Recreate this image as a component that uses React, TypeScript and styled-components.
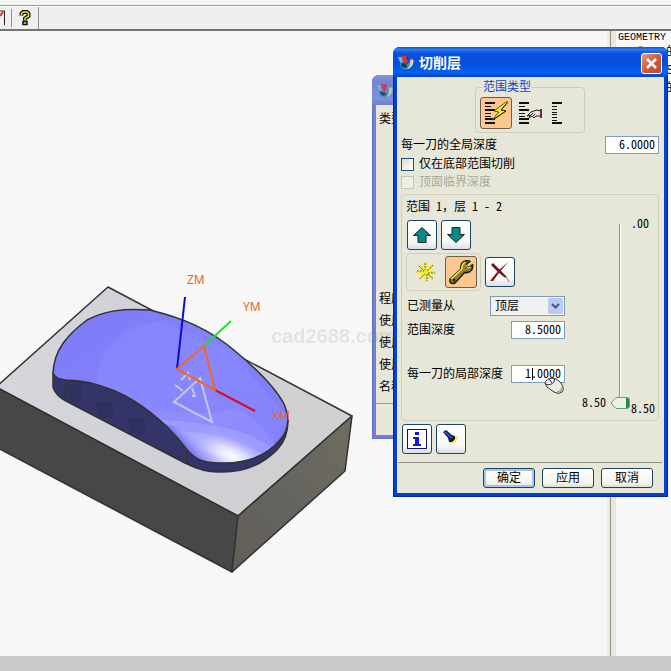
import React from "react";
import styled, { createGlobalStyle, css } from "styled-components";

const GlobalStyle = createGlobalStyle`
  * { box-sizing: border-box; }
  html, body { margin: 0; height: 100%; overflow: hidden; }
  #root { height: 100%; }
  body, button, input, select {
    font-family: "Liberation Sans", "Noto Sans CJK SC", sans-serif;
    font-size: 12px;
    line-height: 16px;
    color: #000;
  }
`;

const halfWidth = css`
  font-family: "Noto Sans CJK SC", monospace;
  font-feature-settings: "hwid";
`;

const Screen = styled.div`
  position: relative;
  display: flex;
  flex-direction: column;
  height: 100vh;
  overflow: hidden;
  background: #f7f7f7;
`;

const MenuStrip = styled.div`
  height: 6px;
  flex: none;
  background: #f4f4f3;
  border-bottom: 1px solid #9c9c9c;
`;

const Toolbar = styled.div`
  display: flex;
  align-items: center;
  flex: none;
  height: 25px;
  background: #efefef;
  border-top: 1px solid #fff;
  border-bottom: 2px solid #73736f;
`;

const ToolButton = styled.button<{ $w: number }>`
  display: flex;
  justify-content: center;
  align-items: center;
  width: ${(p) => p.$w}px;
  height: 22px;
  padding: 0;
  border: 0;
  background: none;
`;

const Separator = styled.span<{ $full?: boolean }>`
  width: 1px;
  height: ${(p) => (p.$full ? 22 : 18)}px;
  background: #8f8f8f;
`;

const Workspace = styled.main`
  display: flex;
  flex: 1;
  min-height: 0;
`;

const Viewport = styled.section`
  flex: 1;
  min-width: 0;
  overflow: hidden;
  svg { display: block; }
`;

const Splitter = styled.div`
  flex: none;
  width: 9px;
  background: #e7e7dc;
  border-left: 2px solid #efefe6;
  &::before {
    content: "";
    display: block;
    width: 1px;
    height: 100%;
    margin-left: 1px;
    background: #95947f;
  }
`;

const Navigator = styled.aside`
  position: relative;
  flex: none;
  width: 55px;
  padding: 1px 0 0 2px;
  overflow: hidden;
  white-space: nowrap;
  background: #f8f8f8;
`;

const NavHeading = styled.div`
  font-family: "Liberation Mono", monospace;
  font-size: 10px;
  line-height: 11px;
`;

const NavMark = styled.svg`
  position: absolute;
  left: 18px;
  top: 12px;
`;

const NavRow = styled.div`
  display: flex;
  height: 18px;
  align-items: center;
  padding-left: 48px;
`;

const StatusBar = styled.footer`
  flex: none;
  height: 15px;
  background: #cbcbcb;
`;

const Watermark = styled.div`
  position: absolute;
  left: 271px;
  top: 325px;
  font-size: 20px;
  line-height: 22px;
  font-weight: 700;
  color: rgba(120, 120, 120, 0.16);
`;

const Dialog = styled.section<{ $x: number; $y: number; $w: number; $inactive?: boolean }>`
  position: absolute;
  left: ${(p) => p.$x}px;
  top: ${(p) => p.$y}px;
  width: ${(p) => p.$w}px;
  padding: 0 4px 4px;
  border-radius: 7px 7px 0 0;
  background: ${(p) => (p.$inactive ? "#7180d2" : "#0541cf")};
  box-shadow: inset 0 0 0 1px ${(p) => (p.$inactive ? "#6272c4" : "#0026a8")};
`;

const TitleBar = styled.header<{ $inactive?: boolean }>`
  display: flex;
  align-items: center;
  height: 30px;
  margin: 0 -4px;
  padding: 2px 6px 0 5px;
  border-radius: 7px 7px 0 0;
  background: ${(p) =>
    p.$inactive
      ? "linear-gradient(#8795dc, #7484d4 20%, #7d90dd 80%, #6f7ecb)"
      : "linear-gradient(#1257c8 0, #2a7df2 8%, #0a50dc 22%, #0450dd 55%, #0560f4 85%, #0344c4)"};
`;

const Title = styled.h1`
  flex: 1;
  margin: 0 0 0 5px;
  font-size: 14px;
  line-height: 20px;
  font-weight: 700;
  color: #fff;
`;

const CloseButton = styled.button`
  display: flex;
  align-items: center;
  justify-content: center;
  width: 21px;
  height: 21px;
  padding: 0;
  border: 1px solid #fff;
  border-radius: 3px;
  background: linear-gradient(135deg, #e59a84, #cf5a3d 50%, #b94a30);
`;

const Body = styled.div`
  display: flex;
  flex-direction: column;
  padding: 3px 5px 5px 4px;
  background: #e7e7d9;
`;

const BackBody = styled.div`
  display: flex;
  flex-direction: column;
  padding: 6px 3px 0;
  background: #e7e7d9;
`;

const BackLabels = styled.div<{ $top?: number }>`
  display: flex;
  flex-direction: column;
  gap: 6px;
  margin-top: ${(p) => p.$top ?? 0}px;
`;

const BackFooter = styled.div`
  height: 32px;
  margin: 8px -3px 0;
  border-top: 1px solid #9a9a90;
`;

const RangeType = styled.fieldset`
  align-self: center;
  display: flex;
  align-items: center;
  gap: 4px;
  width: 110px;
  height: 53px;
  margin: 0;
  padding: 3px 4px;
  border: 1px solid #cbcbb9;
  border-radius: 4px;
`;

const Legend = styled.legend`
  margin-left: 2px;
  padding: 0 1px;
  line-height: 14px;
  color: #1146c4;
`;

const Choice = styled.button<{ $on?: boolean; $w?: number }>`
  display: flex;
  align-items: center;
  justify-content: center;
  flex: none;
  width: ${(p) => p.$w ?? 32}px;
  height: 32px;
  padding: 0;
  border: ${(p) => (p.$on ? "1px solid #6b5f4c" : "0")};
  border-radius: 3px;
  background: ${(p) => (p.$on ? "#fcc890" : "none")};
`;

const Row = styled.div<{ $top: number }>`
  display: flex;
  align-items: center;
  justify-content: space-between;
  margin-top: ${(p) => p.$top}px;
`;

const NumberBox = styled.input`
  width: 54px;
  height: 18px;
  padding: 0 3px 3px;
  border: 1px solid #7d9cc0;
  border-radius: 0;
  background: #fff;
  line-height: 14px;
  text-align: right;
  outline: none;
  ${halfWidth}
`;

const EditWrap = styled.span`
  position: relative;
  display: flex;
`;

const Caret = styled.span`
  position: absolute;
  left: 21px;
  top: 3px;
  width: 1px;
  height: 12px;
  background: #000;
`;

const CheckLabel = styled.label<{ $top: number; $off?: boolean }>`
  display: flex;
  align-items: center;
  gap: 5px;
  height: 16px;
  margin-top: ${(p) => p.$top}px;
  color: ${(p) => (p.$off ? "#a9a99c" : "#000")};
`;

const Check = styled.input`
  appearance: none;
  width: 13px;
  height: 13px;
  margin: 0;
  border: 1px solid #21507e;
  background: linear-gradient(135deg, #dcdcd4, #fff);
  &:disabled {
    border-color: #c6c6b8;
    background: #efefe8;
  }
`;

const Group = styled.section`
  display: flex;
  justify-content: space-between;
  margin-top: 4px;
  padding: 3px 2px 5px 5px;
  border: 1px solid #cfcfbe;
  border-radius: 4px;
`;

const Settings = styled.div`
  display: flex;
  flex-direction: column;
  width: 158px;
`;

const RangeTitle = styled.div`
  height: 16px;
  margin-left: -1px;
  white-space: pre;
  ${halfWidth}
`;

const WideMark = styled.span`
  font-feature-settings: normal;
`;

const ButtonRow = styled.div<{ $top: number; $pull?: boolean }>`
  display: flex;
  align-items: center;
  gap: 4px;
  margin-top: ${(p) => p.$top}px;
  margin-left: ${(p) => (p.$pull ? 1 : 0)}px;
`;

const IconButton = styled.button`
  display: flex;
  align-items: center;
  justify-content: center;
  width: 30px;
  height: 30px;
  padding: 0;
  border: 1px solid #1d4464;
  border-radius: 3px;
  background: linear-gradient(#fff, #f7f7f4 75%, #dcdce6);
`;

const ModeBox = styled.div`
  display: flex;
  align-items: center;
  gap: 3px;
  height: 38px;
  margin-left: -1px;
  padding: 2px 3px;
  border: 1px solid #cfcfbe;
  border-radius: 4px;
`;

const SelectWrap = styled.span`
  position: relative;
  display: flex;
  width: 75px;
`;

const Select = styled.select`
  appearance: none;
  width: 100%;
  height: 20px;
  padding: 0 18px 0 4px;
  border: 1px solid #7d9cc0;
  border-radius: 0;
  background: #f1f1f0;
`;

const SelectArrow = styled.svg`
  position: absolute;
  right: 2px;
  top: 2px;
  pointer-events: none;
`;

const DepthScale = styled.div`
  display: flex;
  align-items: stretch;
  margin-top: 18px;
  height: 199px;
  line-height: 14px;
  ${halfWidth}
`;

const CurrentDepth = styled.output`
  align-self: flex-end;
  width: 24px;
  margin: 0 4px 6px 0;
`;

const ScaleEnds = styled.div`
  display: flex;
  flex-direction: column;
  justify-content: space-between;
  width: 26px;
  padding-left: 1px;
`;

const thumb = `url("data:image/svg+xml,%3Csvg xmlns='http://www.w3.org/2000/svg' width='20' height='12'%3E%3Cpath d='M1 6L6 .5H18L19.500 2V10L18 11.500H6Z' fill='%23eef0ea' stroke='%2358a86c'/%3E%3Cpath d='M16 1H18L19 2V10L18 11H16Z' fill='%23268a42'/%3E%3C/svg%3E")`;

const Slider = styled.input`
  appearance: none;
  writing-mode: vertical-lr;
  width: 20px;
  height: 185px;
  margin: 8px 0 0;
  background: linear-gradient(90deg, transparent 9px, #92928c 9px, #92928c 10px, #fff 10px, #fff 11px, transparent 11px);
  &::-webkit-slider-thumb {
    appearance: none;
    width: 20px;
    height: 12px;
    background: ${thumb} no-repeat;
  }
`;

const Footer = styled.footer`
  display: flex;
  justify-content: flex-end;
  gap: 7px;
  margin: 8px -3px 0;
  padding: 5px 9px 0;
  border-top: 1px solid #8e8e86;
`;

const PushButton = styled.button<{ $primary?: boolean }>`
  width: 52px;
  height: 20px;
  padding: 0;
  border: 1px solid #1d4464;
  border-radius: 3px;
  background: linear-gradient(#fff, #f3f3ee 80%, #dcdcd0);
  box-shadow: ${(p) => (p.$primary ? "inset 0 0 0 2px #a9c3ec" : "none")};
`;

const Pointer = styled.svg`
  position: absolute;
  left: 150px;
  top: 330px;
  pointer-events: none;
`;

const AppIcon = ({ faded }: { faded?: boolean }) => (
  <svg width="16" height="16" viewBox="0 0 16 16" opacity={faded ? 0.8 : 1} aria-hidden="true">
    <path d="M2 7 L8 10 L12 7 L15 4 Q16 9 12.500 12.500 Q9 16 4 13.500 L2 10Z" fill="#2f9aa8" />
    <path d="M12 5 Q16 3 15.500 7 Q15 11 11 13.500 L9 14 Q13 10 12 5Z" fill="#d7d79a" />
    <path d="M3 8 L8 9.500 L9.500 12 L6 13 L3.500 11Z" fill="#0b3d5c" />
    <path d="M0 2 L4 2 L6 7 L3 8 L1 5Z" fill="#63c3dc" />
    <path d="M4 1 L9 1 L8.500 4 L10.500 6.500 L7.500 9 L4.500 6Z" fill="#e0303a" />
    <path d="M9 1 L10 4.500 L8.500 4Z" fill="#7c172e" />
  </svg>
);

const Levels = ({ kind }: { kind: "auto" | "user" | "single" }) => (
  <svg width={kind === "single" ? 14 : 26} height="26" viewBox={kind === "single" ? "0 0 14 26" : "0 0 26 26"} shapeRendering="crispEdges" aria-hidden="true">
    {kind === "single" ? (
      <path d="M2 2H12V4H2ZM2 6H7V7H2ZM2 9H7V10H2ZM2 12H7V13H2ZM2 14H7V15H2ZM2 17H7V18H2ZM2 20H7V21H2ZM2 22H12V24H2Z" fill="#111" />
    ) : (
      <path d="M2 2H12V4H2ZM2 6H8V7H2ZM2 9H12V11H2ZM2 13H8V14H2ZM2 16H8V17H2ZM2 18H12V20H2ZM2 22H12V24H2Z" fill="#111" />
    )}
    {kind === "auto" && (
      <g shapeRendering="auto">
        <path d="M23 2 L11 11 L16 12 L9 20 L23 11 L18 10 L25 2Z" fill="#ffed32" stroke="#5c5210" strokeWidth="1" />
        <path d="M24 3 L18 10 L23 11 L10 20" fill="none" stroke="#2c2810" />
      </g>
    )}
    {kind === "user" && (
      <g shapeRendering="auto">
        <path d="M10 16 L14 12 L20 10 L24 11 V16 L19 16 L17 18 L15 16 L12 18 L13 15Z" fill="#e4e4de" stroke="#222" />
        <path d="M12 17 L16 13 M15 17 L18 14" stroke="#222" />
        <path d="M23 9H25V18H23Z" fill="#8a1f35" />
      </g>
    )}
  </svg>
);

const Arrow = ({ down }: { down?: boolean }) => (
  <svg width="20" height="18" viewBox="0 0 20 18" aria-hidden="true">
    <path
      d={down ? "M6 1.500H14V8.500H18.500L10 16.500L1.500 8.500H6Z" : "M10 1.500L18.500 9.500H14V16.500H6V9.500H1.500Z"}
      fill="#078a86"
      stroke="#132b2a"
    />
  </svg>
);

const Spark = () => (
  <svg width="22" height="22" viewBox="0 0 22 22" aria-hidden="true">
    <path d="M11 1V21M1 11H21M4 4L18 18M18 4L4 18" stroke="#efe732" strokeWidth="2.500" />
    <path d="M10 2V9M12 13V20M2 10H9M13 12H20M4 5L9 10M18 4L12 10M5 18L10 13M13 13L18 18" stroke="#6e6a1d" strokeWidth="1" strokeDasharray="2 1" />
  </svg>
);

const Wrench = () => (
  <svg width="26" height="26" viewBox="0 0 26 26" aria-hidden="true">
    <path d="M2 20 L13 10 Q12 5 16 2.500 Q19 1 22 2.500 L18.500 5 L19 8 L22 8 L24.500 5.500 Q25.500 10 22 12.500 Q19 14 16.500 13.500 L7 24 Q4 25.500 2 23Z" fill="#8c8132" stroke="#201d0d" strokeWidth="1.500" strokeLinejoin="round" />
    <path d="M3 20 L14 10 Q13 6 17 3" fill="none" stroke="#ffe94a" strokeWidth="1.500" />
    <path d="M18 6 L20 9 L23 8" fill="none" stroke="#ffe94a" />
    <circle cx="6" cy="21" r="1.500" fill="#222" />
  </svg>
);

const Cross = () => (
  <svg width="22" height="22" viewBox="0 0 22 22" aria-hidden="true">
    <path d="M2 4 L4 2 L11 9 L17 15 L18 17 L15 16 L9 11Z" fill="#69151c" />
    <path d="M19 1 L10 12 L4 20 L1 20 L9 10Z" fill="#7d151c" />
    <path d="M18 17 L20 21" stroke="#bd686b" />
  </svg>
);

const Info = () => (
  <svg width="20" height="20" viewBox="0 0 20 20" shapeRendering="crispEdges" aria-hidden="true">
    <rect x="0.500" y="0.500" width="19" height="19" fill="#fff" stroke="#101080" />
    <path d="M8 3H12V6H8ZM6 8H12V15H14V17H6V15H8V10H6Z" fill="#1414dc" />
  </svg>
);

const Torch = () => (
  <svg width="20" height="20" viewBox="0 0 20 20" aria-hidden="true">
    <path d="M8 13 L14 7 L17 8 L15 13 L10 15Z" fill="#f3ec54" />
    <path d="M2 3 L5 1 L11 6 L14 7 L12 12 L8 13 L7 9Z" fill="#1b2264" />
    <path d="M4 3 L11 9" stroke="#6b80c8" />
    <path d="M8 13 L14 7 L14 10 L11 13Z" fill="#111" />
  </svg>
);

const shellPath =
  "M53 373 C54 350 67 335 87 320 C104 311 122 308 150 310 C182 318 208 328 235 351 C259 371 275 387 284 404 C290 418 289 430 280 440 C268 454 248 464 220 463 C200 463 193 458 184 446 C165 421 138 401 115 391 C96 383 80 380 66 380 Q55 379 53 373Z";

const Scene = () => (
  <svg width="607" height="625" viewBox="0 31 607 625" role="img" aria-label="Part model">
    <defs>
      <linearGradient id="top" x1="0" y1="0" x2="1" y2="0">
        <stop offset="0" stopColor="#d6d6dc" />
        <stop offset="0.600" stopColor="#cfcfd6" />
        <stop offset="1" stopColor="#d2d2d0" />
      </linearGradient>
      <linearGradient id="right" x1="0" y1="1" x2="1" y2="0">
        <stop offset="0" stopColor="#605e56" />
        <stop offset="0.500" stopColor="#66645f" />
        <stop offset="1" stopColor="#706d5f" />
      </linearGradient>
      <linearGradient id="shell" x1="0" y1="0" x2="1" y2="1">
        <stop offset="0" stopColor="#7c7bf6" />
        <stop offset="0.500" stopColor="#8483fb" />
        <stop offset="1" stopColor="#7a78f4" />
      </linearGradient>
      <radialGradient id="shine" gradientUnits="userSpaceOnUse" cx="0" cy="0" r="1" gradientTransform="translate(232 456) rotate(12) scale(54 22)">
        <stop offset="0" stopColor="#fff" />
        <stop offset="0.350" stopColor="#dadaff" />
        <stop offset="1" stopColor="#9695fb" stopOpacity="0" />
      </radialGradient>
      <linearGradient id="nose" gradientUnits="userSpaceOnUse" x1="184" y1="462" x2="204" y2="444">
        <stop offset="0" stopColor="#5553cc" />
        <stop offset="0.500" stopColor="#8180f4" />
        <stop offset="1" stopColor="#b5b4fd" stopOpacity="0" />
      </linearGradient>
      <clipPath id="shellClip">
        <path d={shellPath} />
      </clipPath>
    </defs>
    <g stroke="#30342f" strokeWidth="1.500" strokeLinejoin="round">
      <path d="M108 287 L352 416 L238 516 L-4 387Z" fill="url(#top)" />
      <path d="M-4 387 L238 516 L232 572 L-4 447Z" fill="#474747" />
      <path d="M238 516 L352 416 L345 471 L232 572Z" fill="url(#right)" />
      <path d="M53 373 V387 Q55 395 66 401 L185 463 Q203 472 218 472 C240 473 261 466 277 450 Q288 439 288 420 L220 400 L66 380Z" fill="#353468" />
      <path d="M67 380 L65 400 M187 450 V464" fill="none" />
    </g>
    <path d="M68 385H81V402H68Z M97 402H113V418H97Z M129 418H145V434H129Z" fill="#2e2d5c" opacity="0.700" />
    <path d={shellPath} fill="url(#shell)" />
    <g clipPath="url(#shellClip)">
      <path d="M96 383 C98 345 128 322 162 322 L230 350 L290 420 L270 450 L160 420Z" fill="#8d8cff" opacity="0.500" />
      <path d="M145 412 C175 408 200 418 235 408 C255 415 268 432 278 450 L210 470Z" fill="#9a99ff" opacity="0.400" />
      <path d="M158 420 C190 421 220 425 250 435 L280 452 L210 470Z" fill="#acabff" opacity="0.500" />
      <path d="M172 430 C200 432 225 437 245 446 L268 456 L210 470Z" fill="#bbbaff" opacity="0.500" />
      <ellipse cx="232" cy="456" rx="56" ry="24" transform="rotate(12 232 456)" fill="url(#shine)" />
      <path d="M163 423 L200 435 L216 462 L190 465Z" fill="url(#nose)" />
    </g>
    <path d={shellPath} fill="none" stroke="#30342f" strokeWidth="1.500" />
    <g fill="none" strokeWidth="2">
      <path d="M174 402 L200 378 L212 422Z M175 385 L183 391 M181 380 L188 373 L190 380 M192 388 L195 396 L192 396" stroke="#c6c6d8" />
      <path d="M177 369 L185 297" stroke="#0808d8" />
      <path d="M204 346 L231 321" stroke="#25dc2d" />
      <path d="M215 390 L255 411" stroke="#d40d2b" />
      <path d="M177 369 L204 346 L215 390Z" stroke="#f0662a" />
    </g>
    <g fill="#e4692d" fontFamily="Noto Sans, sans-serif" fontSize="12">
      <text x="187" y="284">ZM</text>
      <text x="243" y="311">YM</text>
      <text x="272" y="420">XM</text>
    </g>
  </svg>
);

export default function App() {
  return (
    <>
      <GlobalStyle />
      <Screen>
        <MenuStrip />
        <Toolbar>
          <ToolButton $w={11} aria-label="Tool">
            <svg width="11" height="20" viewBox="0 0 11 20" aria-hidden="true">
              <path d="M0 3H4.500V17" fill="none" stroke="#222" />
              <path d="M0 8L3 4" stroke="#d52a2a" strokeWidth="2" />
            </svg>
          </ToolButton>
          <Separator />
          <ToolButton $w={26} aria-label="Help">
            <svg width="12" height="16" viewBox="0 0 12 16" aria-hidden="true">
              <path d="M2.500 5.500V3.500L4 2H8L9.500 3.500V6L6 8.500V10.500" fill="none" stroke="#111" strokeWidth="4" />
              <path d="M2.500 5V3.500L4 2H8L9.500 3.500V6L6 8.500V10" fill="none" stroke="#e9e23f" strokeWidth="1.500" />
              <rect x="4" y="11.500" width="4" height="3" fill="#e9e23f" stroke="#111" strokeWidth="1.500" />
            </svg>
          </ToolButton>
          <Separator $full />
        </Toolbar>

        <Workspace>
          <Viewport>
            <Scene />
          </Viewport>
          <Splitter />
          <Navigator>
            <NavHeading>GEOMETRY</NavHeading>
            <NavMark width="14" height="6" viewBox="0 0 14 6" aria-hidden="true">
              <path d="M2 6 Q7 1 11 6" fill="none" stroke="#8b8a4a" />
            </NavMark>
            <NavRow>的</NavRow>
            <NavRow>S</NavRow>
            <NavRow>的</NavRow>
          </Navigator>
        </Workspace>
        <StatusBar />

        <Dialog $x={372} $y={75} $w={270} $inactive aria-label="Operation">
          <TitleBar $inactive>
            <AppIcon faded />
          </TitleBar>
          <BackBody>
            <BackLabels>
              <span>类型</span>
            </BackLabels>
            <BackLabels $top={164}>
              <span>程序</span>
              <span>使用</span>
              <span>使用</span>
              <span>使用</span>
              <span>名称</span>
            </BackLabels>
            <BackFooter />
          </BackBody>
        </Dialog>

        <Watermark>cad2688.com</Watermark>

        <Dialog $x={393} $y={47} $w={275} role="dialog" aria-labelledby="dialog-title">
          <TitleBar>
            <AppIcon />
            <Title id="dialog-title">切削层</Title>
            <CloseButton aria-label="关闭">
              <svg width="13" height="13" viewBox="0 0 13 13" aria-hidden="true">
                <path d="M2 2L11 11M11 2L2 11" stroke="#fff" strokeWidth="2.500" />
              </svg>
            </CloseButton>
          </TitleBar>
          <Body>
            <RangeType>
              <Legend>范围类型</Legend>
              <Choice $on aria-label="自动" aria-pressed="true"><Levels kind="auto" /></Choice>
              <Choice $w={28} aria-label="用户定义"><Levels kind="user" /></Choice>
              <Choice $w={18} aria-label="单个"><Levels kind="single" /></Choice>
            </RangeType>
            <Row $top={3}>
              <label htmlFor="global-depth">每一刀的全局深度</label>
              <NumberBox id="global-depth" defaultValue="6.0000" />
            </Row>
            <CheckLabel $top={2}>
              <Check type="checkbox" />
              仅在底部范围切削
            </CheckLabel>
            <CheckLabel $top={2} $off>
              <Check type="checkbox" disabled />
              顶面临界深度
            </CheckLabel>

            <Group>
              <Settings>
                <RangeTitle>
                  范围 1<WideMark>，</WideMark>层 1 - 2
                </RangeTitle>
                <ButtonRow $top={6}>
                  <IconButton aria-label="上一个"><Arrow /></IconButton>
                  <IconButton aria-label="下一个"><Arrow down /></IconButton>
                </ButtonRow>
                <ButtonRow $top={3}>
                  <ModeBox>
                    <Choice aria-label="添加范围"><Spark /></Choice>
                    <Choice $on aria-label="编辑范围" aria-pressed="true"><Wrench /></Choice>
                  </ModeBox>
                  <IconButton aria-label="删除范围"><Cross /></IconButton>
                </ButtonRow>
                <Row $top={5}>
                  <label htmlFor="measured-from">已测量从</label>
                  <SelectWrap>
                    <Select id="measured-from" defaultValue="top">
                      <option value="top">顶层</option>
                    </Select>
                    <SelectArrow width="15" height="16" viewBox="0 0 15 16" aria-hidden="true">
                      <rect width="15" height="16" rx="2" fill="#bccaf0" />
                      <path d="M4 6L7.500 9.500L11 6" fill="none" stroke="#485880" strokeWidth="2" />
                    </SelectArrow>
                  </SelectWrap>
                </Row>
                <Row $top={5}>
                  <label htmlFor="range-depth">范围深度</label>
                  <NumberBox id="range-depth" defaultValue="8.5000" />
                </Row>
                <Row $top={26}>
                  <label htmlFor="local-depth">每一刀的局部深度</label>
                  <EditWrap>
                    <NumberBox id="local-depth" defaultValue="1.0000" />
                    <Caret />
                  </EditWrap>
                </Row>
              </Settings>
              <DepthScale>
                <CurrentDepth htmlFor="depth-slider">8.50</CurrentDepth>
                <Slider id="depth-slider" type="range" min="0" max="8.5" step="0.01" defaultValue="8.5" aria-label="深度" />
                <ScaleEnds>
                  <span>.00</span>
                  <span>8.50</span>
                </ScaleEnds>
              </DepthScale>
            </Group>

            <ButtonRow $top={3} $pull>
              <IconButton aria-label="信息"><Info /></IconButton>
              <IconButton aria-label="显示"><Torch /></IconButton>
            </ButtonRow>
            <Footer>
              <PushButton $primary>确定</PushButton>
              <PushButton>应用</PushButton>
              <PushButton>取消</PushButton>
            </Footer>
          </Body>
          <Pointer width="22" height="20" viewBox="0 0 22 20" aria-hidden="true">
            <path d="M2 6 Q3 2 9 1 Q14 1 18 6 Q22 12 19 15 Q16 18 11 15 L4 10Z" fill="#ececea" stroke="#333" />
            <path d="M2 7 Q8 9 11 5 Q12 3 11 1 M6 2 L9 6" fill="none" stroke="#333" />
            <path d="M19 10 Q19 15 14 15" fill="none" stroke="#aaa" strokeWidth="2" />
          </Pointer>
        </Dialog>
      </Screen>
    </>
  );
}
